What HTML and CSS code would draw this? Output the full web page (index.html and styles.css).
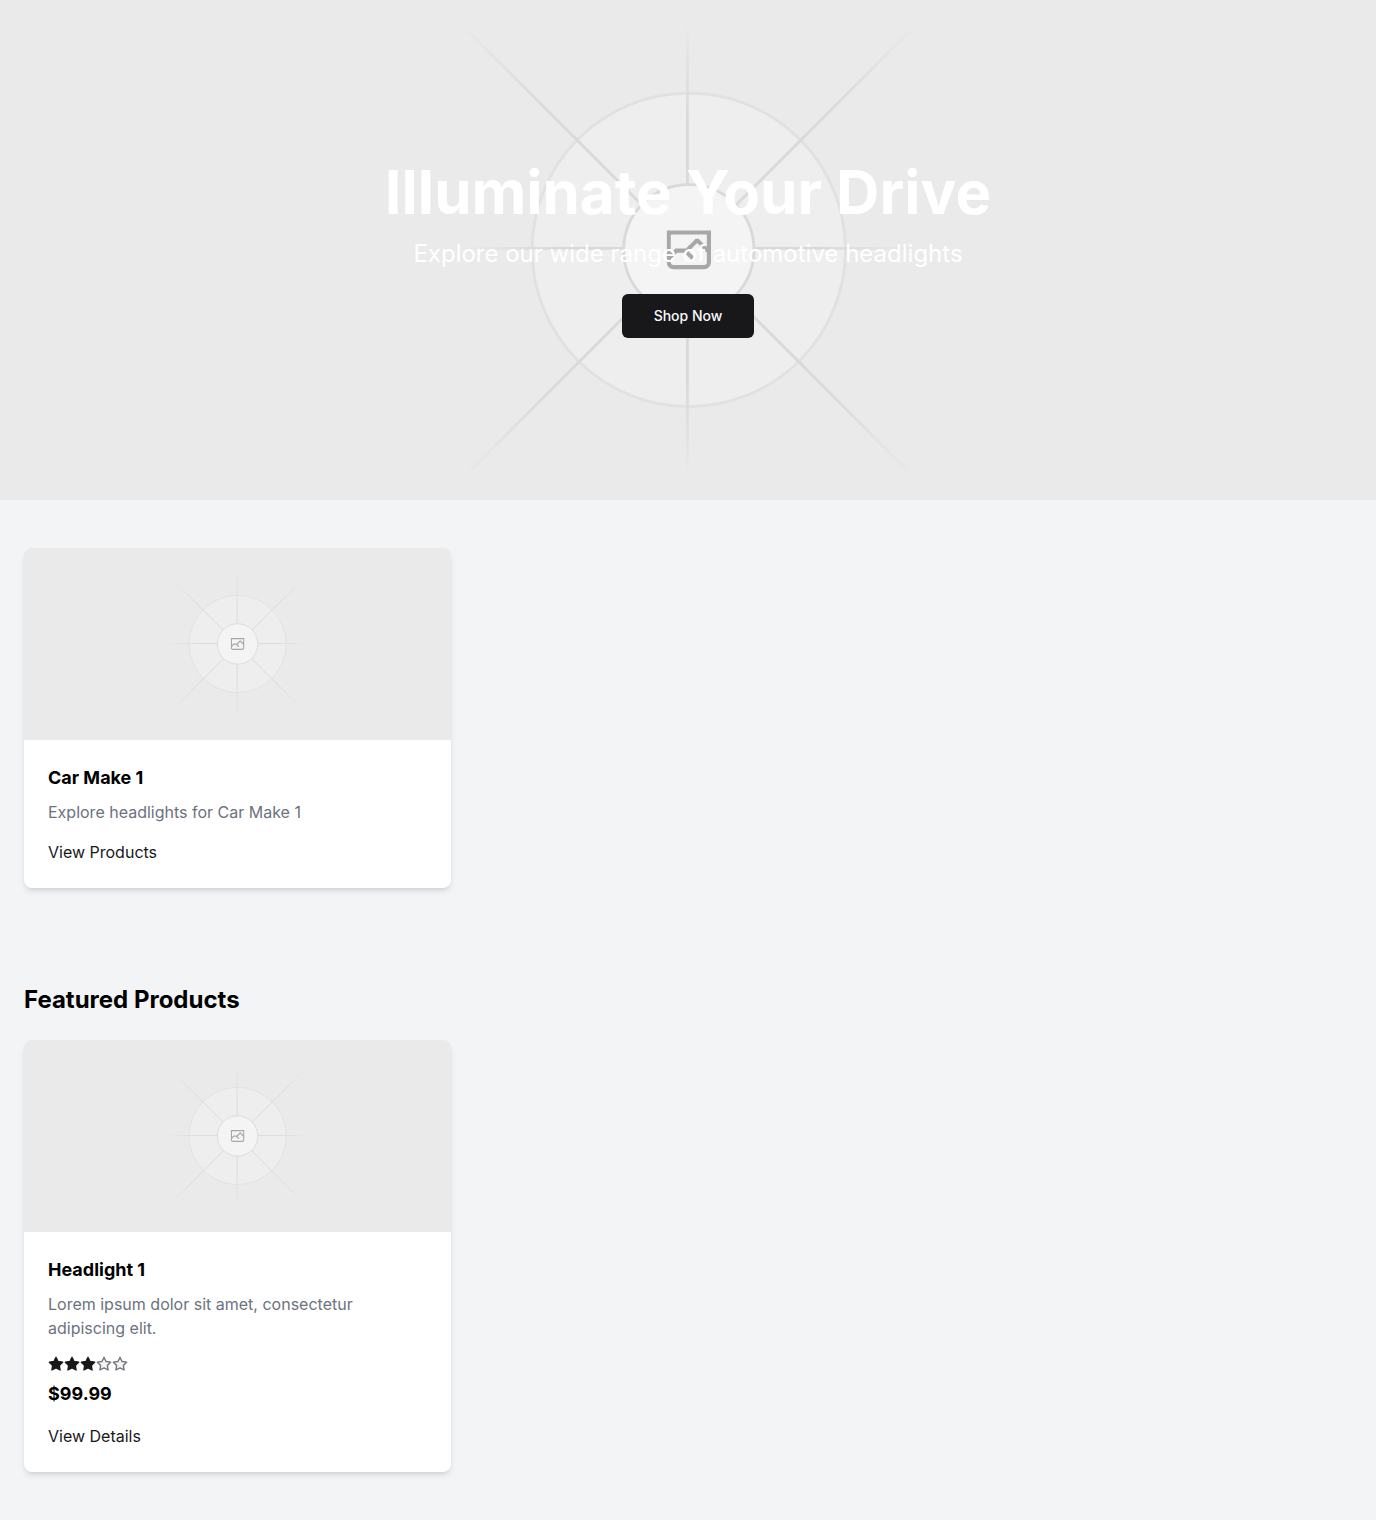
FILE: index.html
```html
<!DOCTYPE html>
<html lang="en">
<head>
  <meta charset="utf-8">
  <meta name="viewport" content="width=device-width, initial-scale=1">
  <title>Automotive Headlights</title>
  <link rel="stylesheet" href="styles.css">
</head>
<body>
  <svg class="sprite" aria-hidden="true" fill="none">
    <defs>
      <linearGradient id="fade-a" x1="554.061" x2="-.48" y1=".083" y2=".087" gradientUnits="userSpaceOnUse">
        <stop stop-color="#C9C9C9" stop-opacity="0"/><stop offset=".208" stop-color="#C9C9C9"/><stop offset=".792" stop-color="#C9C9C9"/><stop offset="1" stop-color="#C9C9C9" stop-opacity="0"/>
      </linearGradient>
      <linearGradient id="fade-b" x1="796.912" x2="404.507" y1="599.963" y2="599.965" gradientUnits="userSpaceOnUse">
        <stop stop-color="#C9C9C9" stop-opacity="0"/><stop offset=".208" stop-color="#C9C9C9"/><stop offset=".792" stop-color="#C9C9C9"/><stop offset="1" stop-color="#C9C9C9" stop-opacity="0"/>
      </linearGradient>
      <linearGradient id="fade-c" x1="600.792" x2="600.794" y1="403.677" y2="796.082" gradientUnits="userSpaceOnUse">
        <stop stop-color="#C9C9C9" stop-opacity="0"/><stop offset=".208" stop-color="#C9C9C9"/><stop offset=".792" stop-color="#C9C9C9"/><stop offset="1" stop-color="#C9C9C9" stop-opacity="0"/>
      </linearGradient>
      <linearGradient id="fade-d" x1="404.85" x2="796.972" y1="403.903" y2="796.02" gradientUnits="userSpaceOnUse">
        <stop stop-color="#C9C9C9" stop-opacity="0"/><stop offset=".208" stop-color="#C9C9C9"/><stop offset=".792" stop-color="#C9C9C9"/><stop offset="1" stop-color="#C9C9C9" stop-opacity="0"/>
      </linearGradient>
      <clipPath id="icon-box">
        <path d="M581.364 580.535h38.689v38.689h-38.689z"/>
      </clipPath>
    </defs>
    <symbol id="placeholder" viewBox="0 0 1200 1200" preserveAspectRatio="xMidYMid slice">
      <rect width="1200" height="1200" fill="#EAEAEA"/>
      <g opacity=".5">
        <g opacity=".5">
          <circle cx="600.709" cy="599.88" r="136.621" fill="#FAFAFA"/>
          <circle cx="600.709" cy="599.88" r="136.621" stroke="#C9C9C9" stroke-width="2.418"/>
        </g>
        <path stroke="url(#fade-a)" stroke-width="2.418" d="M0-1.209h553.581" transform="scale(1 -1) rotate(45 1163.11 91.165)"/>
        <path stroke="url(#fade-b)" stroke-width="2.418" d="M404.846 598.671h391.726"/>
        <path stroke="url(#fade-c)" stroke-width="2.418" d="M599.5 795.742V404.017"/>
        <path stroke="url(#fade-d)" stroke-width="2.418" d="m795.717 796.597-391.441-391.44"/>
        <circle cx="600.709" cy="599.88" r="56.825" fill="#fff"/>
        <g clip-path="url(#icon-box)">
          <path fill="#666" fill-rule="evenodd" clip-rule="evenodd" d="M616.426 586.58h-31.434v16.176l3.553-3.554.531-.531h9.068l.074-.074 8.463-8.463h2.565l7.18 7.181V586.58Zm-15.715 14.654 3.698 3.699 1.283 1.282-2.565 2.565-1.282-1.283-5.2-5.199h-6.066l-5.514 5.514-.073.073v2.876a2.418 2.418 0 0 0 2.418 2.418h26.598a2.418 2.418 0 0 0 2.418-2.418v-8.317l-8.463-8.463-7.181 7.181-.071.072Zm-19.347 5.442v4.085a6.045 6.045 0 0 0 6.046 6.045h26.598a6.044 6.044 0 0 0 6.045-6.045v-7.108l1.356-1.355-1.282-1.283-.074-.073v-17.989h-38.689v23.43l-.146.146.146.147Z"/>
        </g>
        <circle cx="600.709" cy="599.88" r="56.825" stroke="#C9C9C9" stroke-width="2.418"/>
      </g>
    </symbol>
    <symbol id="star" viewBox="0 0 24 24">
      <polygon stroke-width="2" stroke-linecap="round" stroke-linejoin="round" points="12 2 15.09 8.26 22 9.27 17 14.14 18.18 21.02 12 17.77 5.82 21.02 7 14.14 2 9.27 8.91 8.26 12 2"/>
    </symbol>
  </svg>

  <main>
    <section class="hero">
      <svg class="hero-image" aria-hidden="true"><use href="#placeholder"/></svg>
      <div class="hero-content">
        <h1 class="hero-title">Illuminate Your Drive</h1>
        <p class="hero-text">Explore our wide range of automotive headlights</p>
        <button class="button" type="button">Shop Now</button>
      </div>
    </section>

    <section class="section">
      <div class="grid">
        <article class="card">
          <svg class="card-image" role="img" aria-label="Car Make 1"><use href="#placeholder"/></svg>
          <div class="card-body">
            <h3 class="card-title">Car Make 1</h3>
            <p class="card-text">Explore headlights for Car Make 1</p>
            <a class="card-link" href="#">View Products</a>
          </div>
        </article>
      </div>
    </section>

    <section class="section">
      <h2 class="section-title">Featured Products</h2>
      <div class="grid">
        <article class="card">
          <svg class="card-image" role="img" aria-label="Headlight 1"><use href="#placeholder"/></svg>
          <div class="card-body">
            <h3 class="card-title">Headlight 1</h3>
            <p class="card-text">Lorem ipsum dolor sit amet, consectetur adipiscing elit.</p>
            <div class="rating" role="img" aria-label="3 out of 5 stars">
              <svg class="star star-on"><use href="#star"/></svg>
              <svg class="star star-on"><use href="#star"/></svg>
              <svg class="star star-on"><use href="#star"/></svg>
              <svg class="star"><use href="#star"/></svg>
              <svg class="star"><use href="#star"/></svg>
            </div>
            <p class="price">$99.99</p>
            <a class="card-link" href="#">View Details</a>
          </div>
        </article>
      </div>
    </section>
  </main>
</body>
</html>
```

FILE: styles.css
```css
*,
*::before,
*::after {
  box-sizing: border-box;
}

body {
  margin: 0;
  background: #f3f4f6;
  color: #000;
  font-family: Inter, "Liberation Sans", sans-serif;
  font-size: 16px;
  line-height: 24px;
}

h1,
h2,
h3,
p {
  margin: 0;
}

.sprite {
  position: absolute;
  width: 0;
  height: 0;
}

.hero {
  position: relative;
  display: flex;
  align-items: center;
  justify-content: center;
  height: 500px;
  overflow: hidden;
}

.hero-image {
  position: absolute;
  inset: 0;
  width: 100%;
  height: 100%;
  fill: none;
}

.hero-content {
  position: relative;
  display: flex;
  flex-direction: column;
  align-items: center;
  padding: 0 24px;
  color: #fff;
  text-align: center;
}

.hero-title {
  margin-bottom: 16px;
  font-size: 60px;
  font-weight: 700;
  line-height: 60px;
}

.hero-text {
  margin-bottom: 24px;
  font-size: 24px;
  line-height: 32px;
}

.button {
  height: 44px;
  padding: 0 32px;
  border: 0;
  border-radius: 6px;
  background: #18181b;
  color: #fafafa;
  font: inherit;
  font-size: 14px;
  font-weight: 500;
  line-height: 20px;
  cursor: pointer;
}

.section {
  padding: 48px 24px;
}

.section-title {
  margin-bottom: 24px;
  font-size: 24px;
  font-weight: 700;
  line-height: 32px;
}

.grid {
  display: grid;
  grid-template-columns: repeat(3, minmax(0, 1fr));
  gap: 24px;
}

.card {
  overflow: hidden;
  border-radius: 8px;
  background: #fff;
  box-shadow: 0 4px 6px -1px rgb(0 0 0 / 10%), 0 2px 4px -2px rgb(0 0 0 / 10%);
}

.card-image {
  display: block;
  width: 100%;
  height: 192px;
  background: #eaeaea;
  fill: none;
}

.card-body {
  padding: 24px;
}

.card-title {
  margin-bottom: 8px;
  font-size: 18px;
  font-weight: 700;
  line-height: 28px;
}

.card-text {
  margin-bottom: 16px;
  color: #6b7280;
}

.rating {
  display: flex;
  margin-bottom: 8px;
}

.star {
  width: 16px;
  height: 16px;
  fill: #f4f4f5;
  stroke: #71717a;
}

.star-on {
  fill: #18181b;
  stroke: #18181b;
}

.price {
  margin-bottom: 16px;
  font-size: 18px;
  font-weight: 700;
  line-height: 28px;
}

.card-link {
  display: block;
  width: fit-content;
  color: #18181b;
  text-decoration: none;
}

@media (max-width: 900px) {
  .grid {
    grid-template-columns: repeat(2, minmax(0, 1fr));
  }
}

@media (max-width: 600px) {
  .grid {
    grid-template-columns: minmax(0, 1fr);
  }

  .hero-title {
    font-size: 40px;
    line-height: 48px;
  }
}
```
